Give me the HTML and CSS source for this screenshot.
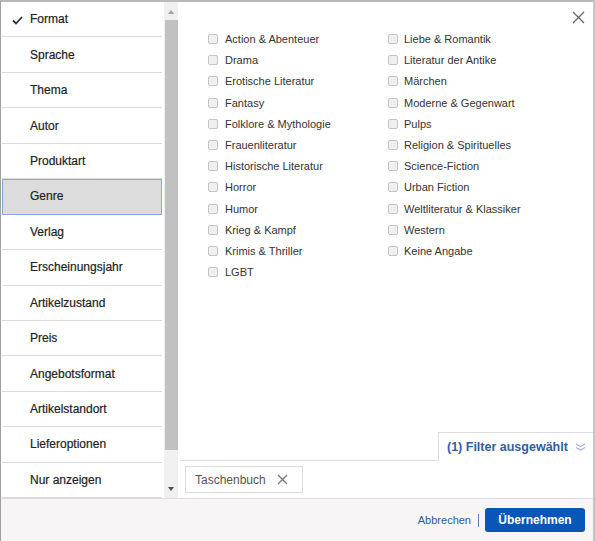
FILE: index.html
```html
<!DOCTYPE html>
<html lang="de">
<head>
    <meta charset="UTF-8">
    <meta name="viewport" content="width=device-width, initial-scale=1.0">
    <title>Filter</title>
    <link rel="stylesheet" href="styles.css">
</head>
<body>
    <div class="modal">
        <div class="modal-body">
            <nav class="facets">
                <ul class="facet-list">
                    <li class="facet done">
                        <svg class="check" width="11" height="9" viewBox="0 0 11 9"><path d="M1 4.5 L4 7.5 L10 1" fill="none" stroke="#333" stroke-width="1.8"/></svg>
                        Format
                    </li>
                    <li class="facet">Sprache</li>
                    <li class="facet">Thema</li>
                    <li class="facet">Autor</li>
                    <li class="facet">Produktart</li>
                    <li class="facet active">Genre</li>
                    <li class="facet">Verlag</li>
                    <li class="facet">Erscheinungsjahr</li>
                    <li class="facet">Artikelzustand</li>
                    <li class="facet">Preis</li>
                    <li class="facet">Angebotsformat</li>
                    <li class="facet">Artikelstandort</li>
                    <li class="facet">Lieferoptionen</li>
                    <li class="facet">Nur anzeigen</li>
                </ul>
                <div class="scrollbar">
                    <span class="arrow up"></span>
                    <div class="thumb"></div>
                    <span class="arrow down"></span>
                </div>
            </nav>

            <section class="values">
                <button class="close" aria-label="Schließen">
                    <svg width="13" height="13" viewBox="0 0 13 13"><path d="M1 1 L12 12 M12 1 L1 12" stroke="#666" stroke-width="1.3"/></svg>
                </button>
                <div class="options">
                    <ul class="option-col">
                        <li><span class="box"></span>Action &amp; Abenteuer</li>
                        <li><span class="box"></span>Drama</li>
                        <li><span class="box"></span>Erotische Literatur</li>
                        <li><span class="box"></span>Fantasy</li>
                        <li><span class="box"></span>Folklore &amp; Mythologie</li>
                        <li><span class="box"></span>Frauenliteratur</li>
                        <li><span class="box"></span>Historische Literatur</li>
                        <li><span class="box"></span>Horror</li>
                        <li><span class="box"></span>Humor</li>
                        <li><span class="box"></span>Krieg &amp; Kampf</li>
                        <li><span class="box"></span>Krimis &amp; Thriller</li>
                        <li><span class="box"></span>LGBT</li>
                    </ul>
                    <ul class="option-col">
                        <li><span class="box"></span>Liebe &amp; Romantik</li>
                        <li><span class="box"></span>Literatur der Antike</li>
                        <li><span class="box"></span>Märchen</li>
                        <li><span class="box"></span>Moderne &amp; Gegenwart</li>
                        <li><span class="box"></span>Pulps</li>
                        <li><span class="box"></span>Religion &amp; Spirituelles</li>
                        <li><span class="box"></span>Science-Fiction</li>
                        <li><span class="box"></span>Urban Fiction</li>
                        <li><span class="box"></span>Weltliteratur &amp; Klassiker</li>
                        <li><span class="box"></span>Western</li>
                        <li><span class="box"></span>Keine Angabe</li>
                    </ul>
                </div>

                <div class="selected-bar">
                    <div class="bar-line"></div>
                    <div class="filter-tab">
                        (1) Filter ausgewählt
                        <svg width="11" height="8" viewBox="0 0 11 8"><path d="M1 1 L5.5 3.5 L10 1 M1 4.5 L5.5 7 L10 4.5" fill="none" stroke="#9fb3d3" stroke-width="1.1"/></svg>
                    </div>
                </div>
                <div class="chips">
                    <span class="chip">Taschenbuch
                        <svg width="11" height="11" viewBox="0 0 11 11"><path d="M1 1 L10 10 M10 1 L1 10" stroke="#777" stroke-width="1.3"/></svg>
                    </span>
                </div>
            </section>
        </div>

        <footer class="modal-footer">
            <a href="#" class="cancel">Abbrechen</a>
            <span class="divider"></span>
            <button class="apply">Übernehmen</button>
        </footer>
    </div>
</body>
</html>
```

FILE: styles.css
```css
* {
    box-sizing: border-box;
}
body {
    margin: 0;
    font-family: "Liberation Sans", Arial, sans-serif;
    color: #333;
    background: #9a9a9a;
}
ul {
    list-style: none;
    margin: 0;
    padding: 0;
}
.modal {
    width: 595px;
    height: 541px;
    display: flex;
    flex-direction: column;
    background: #fff;
    border-top: 2px solid #b9b9b9;
    border-left: 1px solid #a0a0a0;
    border-right: 2px solid #c4c4c4;
}
.modal-body {
    display: flex;
    height: 496px;
}
.facets {
    display: flex;
    width: 177px;
}
.facet-list {
    width: 162px;
    padding-left: 1px;
}
.facet {
    position: relative;
    height: 35.45px;
    display: flex;
    align-items: center;
    padding-left: 28px;
    font-size: 12px;
    color: #222;
    -webkit-text-stroke: 0.2px #222;
    border-bottom: 1px solid #dcdcdc;
}
.facet.active {
    background: #dcdcdc;
    outline: 1px solid #87a7d8;
    outline-offset: -1px;
}
.check {
    position: absolute;
    left: 10px;
    top: 14px;
}
.scrollbar {
    width: 14px;
    margin-left: 2px;
    background: #f0f0f0;
    display: flex;
    flex-direction: column;
    align-items: center;
}
.arrow {
    width: 0;
    height: 0;
    border-left: 3.5px solid transparent;
    border-right: 3.5px solid transparent;
}
.arrow.up {
    margin-top: 8px;
    border-bottom: 4px solid #a3a3a3;
}
.arrow.down {
    margin-top: auto;
    margin-bottom: 7px;
    border-top: 4px solid #505050;
}
.thumb {
    width: 13px;
    height: 430px;
    margin-top: 6px;
    background: #c1c1c1;
}
.values {
    position: relative;
    flex: 1;
    display: flex;
    flex-direction: column;
    margin-left: 2px;
}
.close {
    position: absolute;
    top: 9px;
    right: 8px;
    padding: 0;
    border: none;
    background: none;
}
.options {
    display: flex;
    padding: 26.5px 0 0 28px;
    flex: 1;
}
.option-col {
    width: 180px;
}
.option-col li {
    height: 21.2px;
    display: flex;
    align-items: center;
    font-size: 11px;
    color: #333;
}
.box {
    width: 10px;
    height: 10px;
    margin-right: 7px;
    border: 1px solid #c4c4c4;
    border-radius: 2px;
    background: #efefef;
}
.option-col + .option-col .box {
    margin-right: 6px;
}
.selected-bar {
    display: flex;
    align-items: flex-end;
    height: 29px;
}
.bar-line {
    width: 258px;
    border-bottom: 1px solid #dddddd;
}
.filter-tab {
    flex: 1;
    height: 29px;
    display: flex;
    align-items: center;
    padding-left: 8px;
    gap: 7px;
    border-top: 1px solid #dddddd;
    border-left: 1px solid #dddddd;
    font-size: 12.5px;
    font-weight: bold;
    color: #2f5ea6;
}
.chips {
    height: 37px;
    padding: 5px 0 0 5px;
}
.chip {
    display: inline-flex;
    align-items: center;
    gap: 11px;
    height: 27px;
    width: 118px;
    padding-left: 9px;
    border: 1px solid #dcdcdc;
    font-size: 12px;
    color: #555;
}
.modal-footer {
    flex: 1;
    display: flex;
    align-items: center;
    justify-content: flex-end;
    padding-right: 8px;
    background: #f7f5f5;
    border-top: 1px solid #dddddd;
}
.cancel {
    font-size: 11px;
    color: #2b5ca9;
    text-decoration: none;
}
.divider {
    width: 1px;
    height: 13px;
    margin: 0 6px 0 7px;
    background: #5b80c0;
}
.apply {
    width: 100px;
    height: 24px;
    border: none;
    border-radius: 3px;
    background: #0857b8;
    color: #fff;
    font-family: inherit;
    font-size: 12px;
    font-weight: bold;
}
```
